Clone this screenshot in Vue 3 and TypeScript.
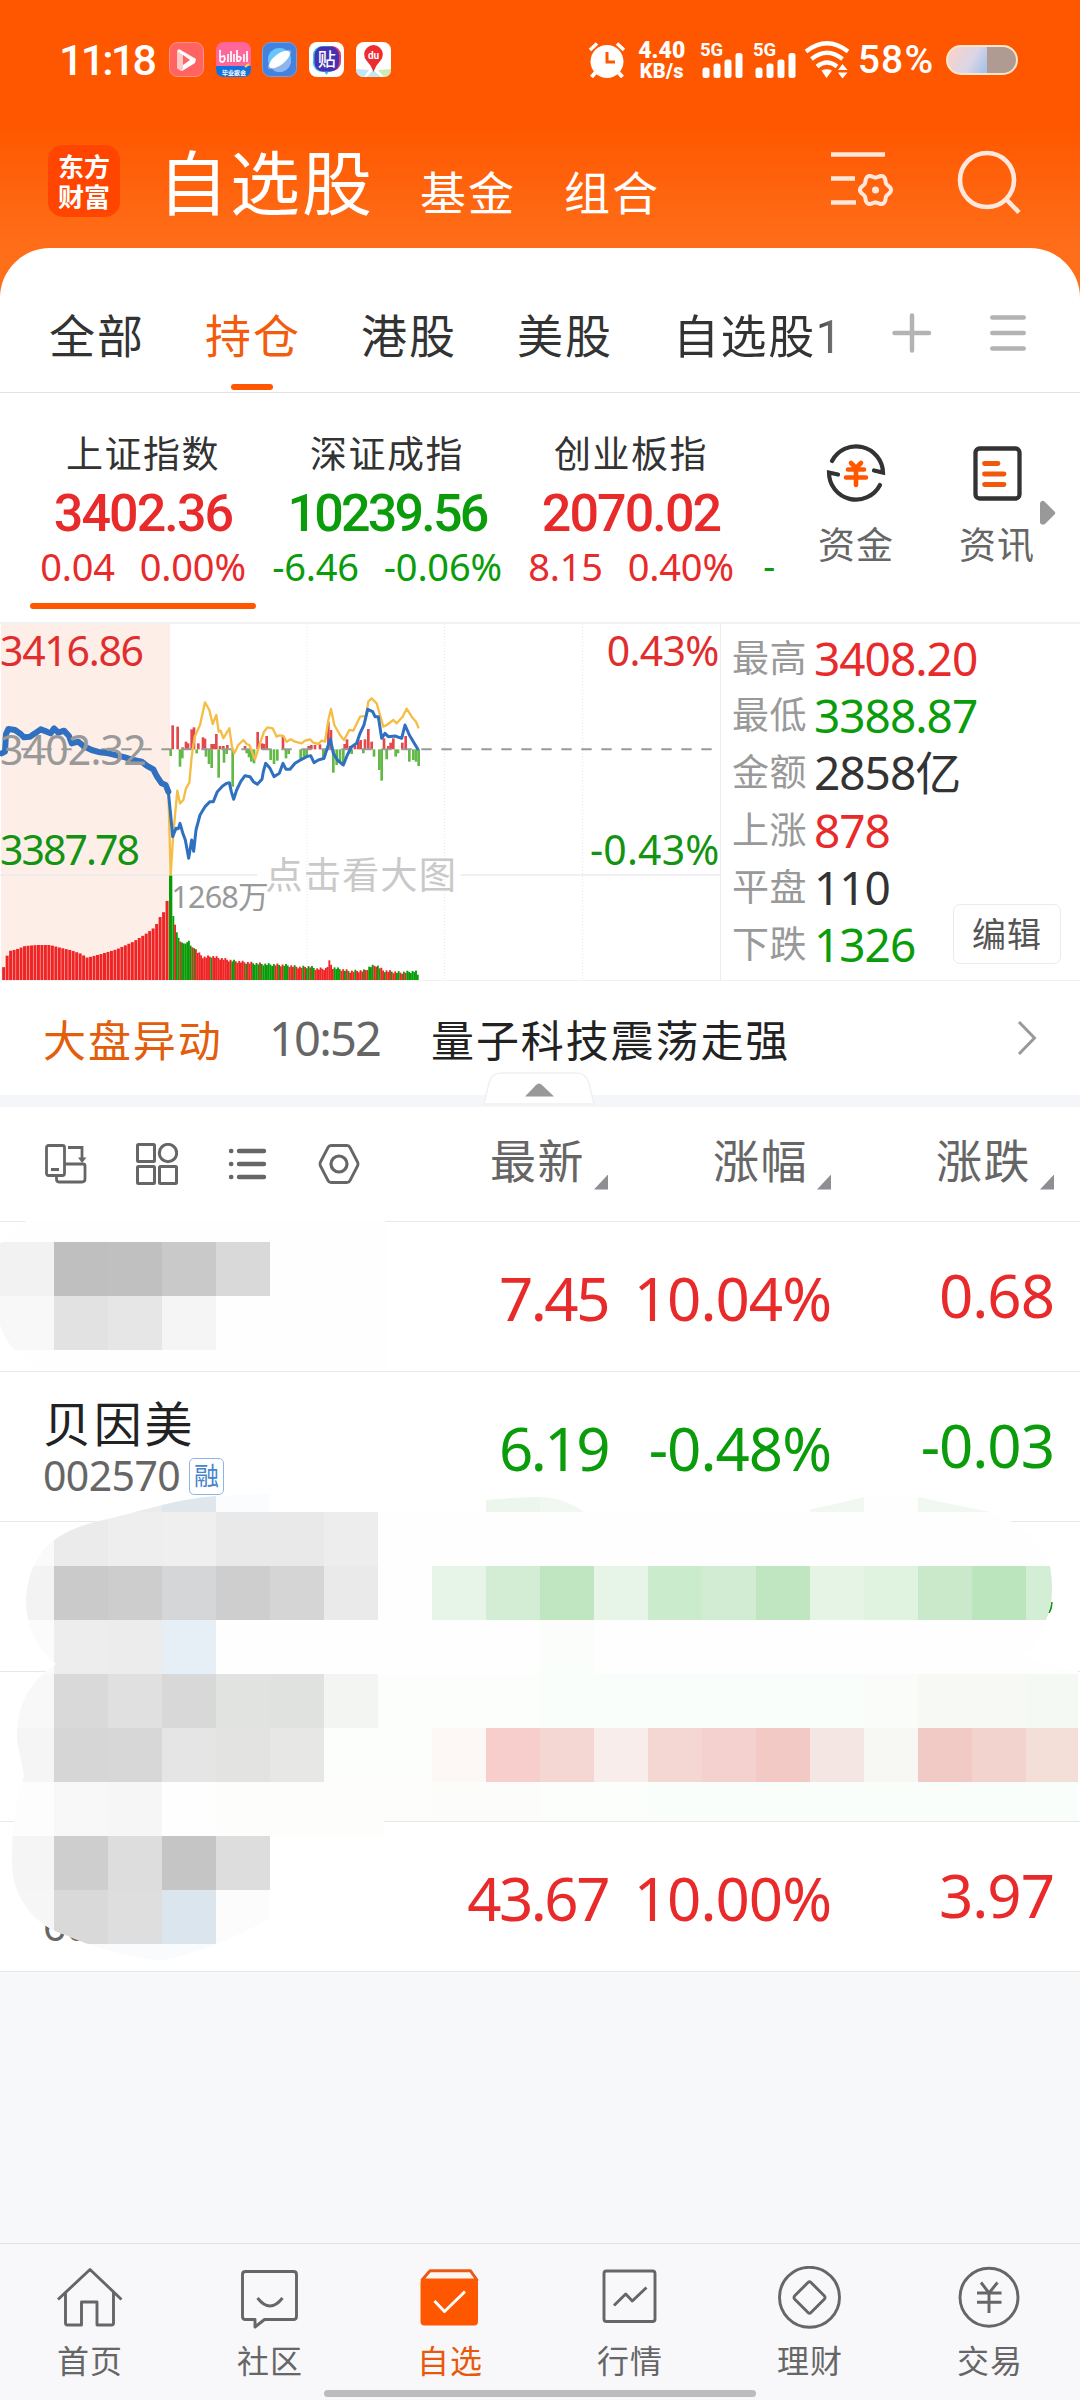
<script setup lang="ts">
type Tone = 'up' | 'down' | 'flat'
type Pt = [number, number]

const tabs = ['全部', '持仓', '港股', '美股']

interface IndexQuote { name: string; value: string; diff: string; pct: string; tone: Tone }
const indices: IndexQuote[] = [
  { name: '上证指数', value: '3402.36', diff: '0.04', pct: '0.00%', tone: 'up' },
  { name: '深证成指', value: '10239.56', diff: '-6.46', pct: '-0.06%', tone: 'down' },
  { name: '创业板指', value: '2070.02', diff: '8.15', pct: '0.40%', tone: 'up' },
]

const stats: { label: string; value: string; tone: Tone }[] = [
  { label: '最高', value: '3408.20', tone: 'up' },
  { label: '最低', value: '3388.87', tone: 'down' },
  { label: '金额', value: '2858亿', tone: 'flat' },
  { label: '上涨', value: '878', tone: 'up' },
  { label: '平盘', value: '110', tone: 'flat' },
  { label: '下跌', value: '1326', tone: 'down' },
]

interface Row { name?: string; code?: string; tag?: string; price?: string; pct?: string; diff?: string; tone: Tone }
const rows: Row[] = [
  { price: '7.45', pct: '10.04%', diff: '0.68', tone: 'up' },
  { name: '贝因美', code: '002570', tag: '融', price: '6.19', pct: '-0.48%', diff: '-0.03', tone: 'down' },
  { tone: 'down' },
  { tone: 'up' },
  { code: '60', price: '43.67', pct: '10.00%', diff: '3.97', tone: 'up' },
]

/* Gear outline with six lobes */
const gear = Array.from({ length: 73 }, (_, i) => {
  const a = (i * Math.PI) / 36
  const r = 14 + 1.6 * Math.cos(6 * a)
  return `${(44.5 + r * Math.cos(a)).toFixed(1)},${(38 + r * Math.sin(a)).toFixed(1)}`
}).join(' ')

/* Intraday chart, three units per pixel */
const blueOpen = '5,430 15,425 18,372 25,357 45,360 62,372 72,382 90,380 105,370 122,358 140,365 152,370 162,355 175,368 192,362 207,378 215,400 235,395 250,408 275,420 300,427 325,430 350,436 375,442 400,450 425,455 440,467 460,478 470,498 485,520 497,525 505,545'
const blueLine = '505,545 512,615 518,680 528,655 535,656 540,640 548,668 556,690 566,745 575,690 581,724 588,660 600,615 615,590 630,575 640,575 652,545 668,528 680,520 688,518 694,545 701,568 710,540 722,515 735,497 750,500 760,515 772,523 786,508 790,485 797,460 810,475 822,500 838,490 849,460 858,478 870,478 885,460 905,448 920,440 932,437 942,458 955,450 972,445 980,420 991,387 1000,430 1012,450 1030,465 1042,435 1055,410 1070,400 1080,370 1092,345 1103,298 1118,305 1125,320 1135,320 1145,385 1155,370 1165,380 1185,378 1205,385 1215,345 1228,375 1240,395 1255,420'
const yellowLine = '505,540 512,795 520,670 532,542 540,580 550,570 558,535 568,518 575,440 584,380 600,345 615,277 628,300 638,342 649,315 656,365 662,362 670,385 688,355 696,410 703,430 715,405 730,390 740,402 748,405 765,448 780,400 792,365 803,352 818,355 830,380 838,376 850,378 860,395 872,388 885,395 905,400 915,392 930,388 940,398 955,402 965,392 975,395 985,330 993,297 1003,345 1020,375 1032,390 1048,360 1060,362 1080,320 1098,318 1105,275 1115,265 1130,280 1140,315 1150,350 1160,345 1180,330 1190,340 1208,320 1220,296 1235,320 1248,335 1256,355'
const upBars: Pt[] = [[518, 346], [533, 350], [548, 412], [558, 395], [564, 400], [575, 358], [582, 352], [595, 400], [609, 382], [615, 386], [635, 402], [642, 402], [649, 372], [660, 408], [670, 408], [682, 405], [735, 408], [773, 366], [786, 400], [792, 402], [800, 378], [849, 378], [926, 408], [934, 405], [945, 405], [960, 403], [985, 335], [993, 360], [1034, 402], [1041, 388], [1050, 408], [1065, 408], [1075, 395], [1082, 390], [1095, 388], [1105, 357], [1115, 395], [1152, 385], [1165, 408], [1172, 398], [1180, 385], [1207, 398], [1217, 378]]
const downBars: Pt[] = [[512, 438], [540, 470], [547, 445], [590, 430], [618, 440], [627, 462], [635, 474], [656, 503], [672, 458], [680, 432], [698, 530], [740, 430], [747, 442], [754, 455], [762, 460], [812, 450], [822, 462], [832, 452], [858, 445], [866, 432], [902, 452], [912, 440], [920, 438], [970, 450], [977, 432], [1000, 488], [1010, 465], [1020, 455], [1030, 462], [1055, 432], [1090, 430], [1122, 440], [1138, 480], [1145, 512], [1160, 448], [1187, 440], [1194, 430], [1228, 455], [1240, 450], [1248, 455], [1256, 468]]

function level(points: Pt[], x: number): number {
  for (let i = 1; i < points.length; i++) {
    const a = points[i - 1]
    const b = points[i]
    if (x <= b[0]) return a[1] + ((b[1] - a[1]) * (x - a[0])) / (b[0] - a[0])
  }
  return points[points.length - 1][1]
}
const openEnvelope: Pt[] = [[10, 1075], [20, 1040], [28, 1023], [50, 1018], [75, 1008], [110, 1005], [150, 1005], [180, 1013], [210, 1020], [240, 1030], [262, 1043], [300, 1033], [350, 1018], [400, 995], [440, 970], [460, 955], [470, 942], [482, 918], [492, 905], [502, 870]]
const openVolume = Array.from({ length: 48 }, (_, i) => {
  const x = 11 + i * 10.43
  return { x, y: level(openEnvelope, x) }
})
const dayEnvelope: Pt[] = [[520, 918], [526, 948], [533, 978], [541, 995], [555, 1002], [567, 992], [573, 1010], [585, 1016], [593, 1027], [610, 1042], [635, 1039], [660, 1045], [700, 1053], [760, 1060], [800, 1063], [860, 1066], [900, 1072], [930, 1070], [950, 1077], [980, 1076], [988, 1055], [998, 1073], [1050, 1084], [1095, 1082], [1110, 1070], [1130, 1066], [1150, 1082], [1200, 1088], [1247, 1084], [1258, 1102]]
const greenSpans: Pt[] = [[517, 523], [530, 536], [545, 572], [578, 583], [631, 637], [696, 702], [738, 742], [755, 778], [785, 826], [835, 840], [850, 866], [884, 889], [905, 910], [920, 926], [932, 946], [1000, 1020], [1030, 1035], [1045, 1050], [1066, 1071], [1088, 1092], [1105, 1118], [1133, 1139], [1150, 1155], [1175, 1180], [1190, 1200], [1207, 1212], [1222, 1262]]
const dayVolume = Array.from({ length: 142 }, (_, i) => {
  const x = 520 + i * 5.2
  const jitter = i > 12 ? ((i * 7) % 5) * 2 - 4 : 0
  return { x, y: level(dayEnvelope, x) + jitter, green: greenSpans.some(([a, b]) => x >= a && x <= b) }
})

/* Privacy mosaic, 54px tiles; every entry is a row top with its tile colours from x = 0 */
const G = '#fcfefb'
const H = '#f9fefa'
const mosaic: [number, string[]][] = [
  [1242, ['#f2f2f2', '#bfbfbf', '#c0c0c0', '#c9c9c9', '#d9d9d9']],
  [1296, ['#f8f8f8', '#e2e2e2', '#e6e6e6', '#f5f5f5']],
  [1458, ['', '#ebebeb', '#ebebeb', '#dfe6ec', '#fafcfe', '', '', '', '', '#ecf6ed', '#f0f8f1', '', '', '', '', '#f1f8f2', '', '#f1f8f2', '#f1f8f2']],
  [1512, ['#fafafa', '#ebebeb', '#eeeeee', '#efefef', '#e9e9e9', '#e9e9e9', '#ededed']],
  [1566, ['#f3f3f3', '#cacaca', '#cdcdcd', '#d4d6d8', '#cecece', '#d5d5d5', '#eaeaea', '', '#e6f5e7', '#d2edd3', '#bfe6c1', '#e6f5e7', '#cbebcd', '#d1ecd2', '#bfe6c0', '#e5f4e5', '#e0f2e0', '#c9e9ca', '#bbe5bc', '#d4edd5']],
  [1620, ['#fbfbfb', '#ededed', '#ececec', '#e6eef6', '', '', '', '', '', '', '#fbfdfb']],
  [1674, ['#f8f8f8', '#d9d9d9', '#e0e0e0', '#d8d8d8', '#e1e3e0', '#e0e2df', '#f3f5f2', G, G, G, H, H, H, H, H, H, '#f9fcf9', '#f7f9f5', '#f7f9f5', '#f5f9f4']],
  [1728, ['#f5f5f5', '#d6d6d6', '#d7d7d7', '#e5e5e5', '#e3e4e1', '#e7e7e5', G, G, '#fdf8f5', '#f7cecc', '#f4d7d3', '#f8edea', '#f4d6d3', '#f4d1cf', '#f3c9c6', '#f4e6e3', '#f7f8f3', '#f2cac5', '#f2d3cd', '#f3ded8']],
  [1782, ['#fdfdfd', '#f8f8f8', '#f6f6f6', '', '#fdfefb', '#fdfefb', '#fdfefb', '#fdfefb', '#fcfdfa', '#fcfdfa', G, G, H, H, H, H, H, H, H, H]],
  [1836, ['#f5f5f5', '#cecece', '#dddddd', '#c5c5c5', '#dddddd']],
  [1890, ['#f6f6f6', '#d9d9d9', '#dedede', '#dbe5ee', '#fcfcfc']],
  [1944, ['#fafbfd', '#fafbfd', '#fafbfd', '#fafbfd', '#fcfcfd']],
]
const tiles = mosaic.flatMap(([y, cols]) => cols.map((fill, i) => ({ x: i * 54, y, fill })).filter((t) => t.fill))

const nav = ['首页', '社区', '自选', '行情', '理财', '交易']
</script>

<template>
  <div class="screen">
    <header class="head">
      <div class="status">
        <span class="clock">11:18</span>
        <div class="apps">
          <svg width="35" height="35" viewBox="0 0 35 35">
            <rect x=".5" y=".5" width="34" height="34" rx="8" fill="#ff6462" stroke="#ff9087" />
            <path d="M10 7 L27 17 L26 21 L13 29 L8 26 V9Z" fill="#fff" />
            <path d="M8 9 L14 13 V27 L12 29 L8 26Z" fill="#ffc9c8" />
            <path d="M14 13 L21 18 L14 23Z" fill="#ff6462" />
          </svg>
          <svg width="35" height="35" viewBox="0 0 35 35">
            <rect width="35" height="35" rx="8" fill="#ff6699" />
            <path d="M0 24 H35 V27 Q35 35 27 35 H8 Q0 35 0 27Z" fill="#1172dd" />
            <path d="M4 8 V18 Q4 20 7 20 Q10 18 8 14 L4 15 M12 12 V20 M15 9 V20 M18 12 V20 M21 8 V19 Q24 20 25 16 Q24 14 21 15 M28 12 V20 M31 9 V20" fill="none" stroke="#fff" stroke-width="1.700" />
            <text x="18" y="32.500" text-anchor="middle" font-size="6" font-weight="700" fill="#fff">毕业歌会</text>
            <path d="M29 25 L33 22" stroke="#ffd83d" stroke-width="2" />
          </svg>
          <svg width="35" height="35" viewBox="0 0 35 35">
            <rect x=".5" y=".5" width="34" height="34" rx="8" fill="#4382df" stroke="#75a0e6" />
            <circle cx="17.500" cy="17.500" r="11.500" fill="#69c6fb" />
            <path d="M7 23 A11.500 11.500 0 0 0 29 17Z" fill="#8fb5ee" />
            <ellipse cx="17.500" cy="17.500" rx="14.500" ry="5" transform="rotate(-38 17.5 17.500)" fill="#7fa9eb" />
            <ellipse cx="17.500" cy="17.500" rx="12.500" ry="5.500" transform="rotate(-38 17.5 17.500)" fill="#fff" />
          </svg>
          <svg width="35" height="35" viewBox="0 0 35 35">
            <rect width="35" height="35" rx="8" fill="#fff" />
            <rect x="6" y="4" width="26" height="25" rx="9" fill="#e2406a" />
            <rect x="4" y="4" width="25" height="26" rx="9" fill="#3abef2" />
            <path d="M14 28 L17.500 33 L21 28Z" fill="#3abef2" />
            <rect x="5.500" y="4.500" width="24.500" height="25" rx="8.500" fill="#4432b2" />
            <text x="17.700" y="23.500" text-anchor="middle" font-size="18" font-weight="500" fill="#fff">贴</text>
          </svg>
          <svg width="35" height="35" viewBox="0 0 35 35">
            <rect width="35" height="35" rx="8" fill="#fff" />
            <path d="M0 27 L13 28 L8 35 Q0 35 0 27Z" fill="#bfe7f5" />
            <path d="M11 35 L17 28 L25 35Z" fill="#bfe7f5" />
            <path d="M22 28 L35 27 Q35 35 28 35Z" fill="#cfeab4" />
            <path d="M17.500 30 Q15 23 10.500 18.500 A9.300 9.300 0 1 1 24.500 18.500 Q20 23 17.500 30Z" fill="#ee2b2f" />
            <text x="17.500" y="17" text-anchor="middle" font-size="10" font-weight="700" fill="#fff">du</text>
          </svg>
        </div>
        <svg class="alarm" width="38" height="38" viewBox="0 0 38 38" fill="none" stroke="#fff">
          <circle cx="19" cy="20.500" r="16.500" fill="#fff" stroke="none" />
          <path d="M2 9 L9 2.500 M36 9 L29 2.500" stroke-width="3.500" />
          <path d="M8 31 L3.500 36 M30 31 L34.500 36" stroke-width="4" />
          <path d="M19 11 V21 H27" stroke="#ff5700" stroke-width="3" />
        </svg>
        <div class="speed"><b>4.40</b><b class="unit">KB/s</b></div>
        <svg v-for="n in 2" :key="n" class="signal" width="44" height="38" viewBox="0 0 44 38" fill="#fff">
          <text x="0" y="14.500" font-size="18.500" font-weight="700">5G</text>
          <rect x="2.500" y="26.500" width="7" height="10.500" rx="2.500" />
          <rect x="13.500" y="22.500" width="7" height="14.500" rx="2.500" />
          <rect x="24.500" y="18.500" width="7" height="18.500" rx="2.500" />
          <rect x="35.500" y="12" width="7" height="25" rx="2.500" />
        </svg>
        <svg class="wifi" width="46" height="38" viewBox="0 0 46 38" fill="none" stroke="#fff" stroke-width="4.200">
          <path d="M2 10.500 Q23 -6 44 10.500" />
          <path d="M7.500 18 Q23 5.500 38.500 18" />
          <path d="M13 25.500 Q23 17.500 33 25.500" />
          <path d="M17.500 29.500 Q22.500 27 28 29.500 L22.500 37Z" fill="#fff" stroke="none" />
          <path d="M34 29 L38.500 23 L43.500 29Z M34 31.500 L38.500 37.500 L43.500 31.500Z" fill="#fff" stroke="none" />
        </svg>
        <span class="battery-text">58%</span>
        <span class="battery"></span>
      </div>
      <div class="title-row">
        <div class="logo"><span>东方</span><span>财富</span></div>
        <span class="title">自选股</span>
        <span class="sub">基金</span>
        <span class="sub">组合</span>
        <svg class="manage" width="64" height="60" viewBox="0 0 64 60" fill="none" stroke="#ffe7dc" stroke-width="4.600">
          <path d="M0 2.500 H54 M0 26.500 H24 M0 50.500 H25" />
          <polygon :points="gear" stroke-width="4" />
          <circle cx="44.500" cy="38" r="3.500" fill="#ffe7dc" stroke="none" />
        </svg>
        <svg class="search" width="64" height="66" viewBox="0 0 64 66" fill="none" stroke="#ffe7dc" stroke-width="4.600">
          <circle cx="30" cy="30" r="27" />
          <path d="M48.500 48.500 L62 62.500" />
        </svg>
      </div>
    </header>

    <main class="sheet">
      <nav class="tabs">
        <span v-for="(t, i) in tabs" :key="t" class="tab" :class="{ on: i === 1 }">{{ t }}</span>
        <span class="tab fade">自选股1</span>
        <svg class="plus" width="40" height="40" viewBox="0 0 40 40" stroke="#b3b3b3" stroke-width="4.500" stroke-linecap="round">
          <path d="M2.500 20 H37 M20 2.500 V37.500" />
        </svg>
        <svg class="menu" width="36" height="38" viewBox="0 0 36 38" stroke="#b3b3b3" stroke-width="4.500" stroke-linecap="round">
          <path d="M2.300 3.500 H33.700 M2.300 19 H33.700 M2.300 34.500 H33.700" />
        </svg>
      </nav>

      <section class="indices">
        <div v-for="(q, i) in indices" :key="q.name" class="quote" :class="[q.tone, { on: i === 0 }]">
          <span class="qname">{{ q.name }}</span>
          <span class="qvalue">{{ q.value }}</span>
          <span class="qsub"><i>{{ q.diff }}</i><i>{{ q.pct }}</i></span>
        </div>
        <span class="next down">-</span>
        <div class="tool fund">
          <svg width="64" height="62" viewBox="0 0 64 62" fill="none" stroke="#333" stroke-width="4.200" stroke-linecap="round">
            <path d="M8 19 A27 27 0 0 1 59 30.500 L50 28.500" />
            <path d="M56 43 A27 27 0 0 1 5 30.500 L14 32.500" />
            <path d="M27 21 L32 26 L37 21 M24 27.500 H40 M22 35.500 H42 M32 27 V43" stroke="#ff5700" stroke-width="4.600" />
          </svg>
          <span>资金</span>
        </div>
        <div class="tool">
          <svg width="64" height="62" viewBox="0 0 64 62" fill="none" stroke="#333" stroke-width="4.300" stroke-linecap="round">
            <rect x="10.500" y="6.500" width="44" height="50" rx="4" />
            <path d="M19.500 21.500 H33 M19.500 32 H39 M19.500 42.500 H39" stroke="#f2580c" stroke-width="4.800" />
          </svg>
          <span>资讯</span>
        </div>
        <svg class="more" width="16" height="26" viewBox="0 0 16 26"><path d="M0 3 Q2 -1 5 2 L14.500 11.500 Q16 13 14.500 14.500 L5 24 Q2 26 0 23Z" fill="#999" /></svg>
      </section>

      <section class="market">
        <svg class="chart" width="720" height="356" viewBox="0 42 2160 1068">
          <rect x="3" y="42" width="507" height="1068" fill="#fdeee8" />
          <g stroke="#e6e6ea" stroke-width="3" stroke-dasharray="3 6">
            <path d="M921 42 V1110 M1334 42 V1110 M1748 42 V1110" />
          </g>
          <path d="M0 795 H772 M1382 795 H2160" stroke="#ececee" stroke-width="4" />
          <g fill="#e5484a"><rect v-for="[x, y] in upBars" :key="x" :x="x - 4" :y="y" width="8" :height="418 - y" /></g>
          <g fill="#62b946"><rect v-for="[x, y] in downBars" :key="x" :x="x - 4" y="418" width="8" :height="y - 418" /></g>
          <path d="M64 418 H2160" stroke="#999" stroke-width="6" stroke-dasharray="31 29" />
          <polyline :points="yellowLine" fill="none" stroke="#f4bd45" stroke-width="7" stroke-linejoin="round" />
          <polyline :points="blueOpen" fill="none" stroke="#3070c0" stroke-width="18" stroke-linejoin="round" stroke-linecap="round" />
          <polyline :points="blueLine" fill="none" stroke="#3070c0" stroke-width="9" stroke-linejoin="round" />
          <g fill="#ef2425"><rect v-for="b in openVolume" :key="b.x" :x="b.x - 4.500" :y="b.y" width="9" :height="1110 - b.y" /></g>
          <rect v-for="b in dayVolume" :key="b.x" :x="b.x - 2.800" :y="b.y" width="5.600" :height="1110 - b.y" :fill="b.green ? '#079c07' : '#ef2425'" />
          <rect x="507" y="797" width="10" height="313" fill="#079c07" />
          <g font-size="123">
            <text x="0" y="169" fill="#e02e2e" textLength="432">3416.86</text>
            <text x="0" y="466" fill="#999" textLength="440">3402.32</text>
            <text x="0" y="766" fill="#129412" textLength="420">3387.78</text>
            <text x="1820" y="169" fill="#e02e2e" textLength="338">0.43%</text>
            <text x="1770" y="766" fill="#129412" textLength="388">-0.43%</text>
          </g>
          <text x="514" y="893" font-size="92" fill="#999" textLength="292">1268万</text>
          <text x="796" y="838" font-size="112" fill="#c9c9c9" textLength="572">点击看大图</text>
        </svg>
        <div class="stats">
          <p v-for="s in stats" :key="s.label"><span class="label">{{ s.label }}</span><span class="value" :class="s.tone">{{ s.value }}</span></p>
          <span class="edit">编辑</span>
        </div>
      </section>

      <section class="news">
        <span class="kind">大盘异动</span>
        <span class="time">10:52</span>
        <span class="headline">量子科技震荡走强</span>
        <svg width="20" height="36" viewBox="0 0 20 36" fill="none" stroke="#999" stroke-width="3"><path d="M2 2 L17.500 18 L2 34" /></svg>
        <svg class="handle" width="112" height="33" viewBox="0 0 112 33">
          <path d="M1 32 L6 11 Q8 1 19 1 H93 Q103 1 106 11 L111 32Z" fill="#fff" stroke="#f0f0f2" stroke-width="1.500" />
          <path d="M42 24.500 L53 13 Q56 10 59 13 L71 24.500Z" fill="#999" />
        </svg>
      </section>

      <section class="columns">
        <svg width="42" height="42" viewBox="0 0 42 42" fill="none" stroke="#666" stroke-width="2.800">
          <rect x="1.500" y="2.500" width="18" height="30" rx="2" />
          <path d="M6 26.500 H14 M23 4.500 H37 V16 M20 21 H38 Q40 21 40 23 V36 Q40 39 37 39 H14 Q11.500 39 11.500 36 V33" />
          <path d="M33 14.500 H41.500 L37 20Z" fill="#666" stroke="none" />
        </svg>
        <svg width="42" height="42" viewBox="0 0 42 42" fill="none" stroke="#666" stroke-width="3">
          <rect x="1.500" y="1.500" width="17" height="17" rx="1" /><circle cx="32" cy="10" r="8.700" />
          <rect x="1.500" y="23.500" width="17" height="17" rx="1" /><rect x="23.500" y="23.500" width="17" height="17" rx="1" />
        </svg>
        <svg width="42" height="42" viewBox="0 0 42 42" stroke="#666" stroke-width="4.400" stroke-linecap="round">
          <path d="M4 8 h.3 M4 21 h.3 M4 34 h.3 M12 8 H37 M12 21 H37 M12 34 H37" />
        </svg>
        <svg width="42" height="42" viewBox="0 0 42 42" fill="none" stroke="#666" stroke-width="2.800">
          <path d="M13 2.500 H29 Q31 2.500 32 4.500 L39.500 19 Q40.500 21 39.500 23 L32 37.500 Q31 39.500 29 39.500 H13 Q11 39.500 10 37.500 L2.500 23 Q1.500 21 2.500 19 L10 4.500 Q11 2.500 13 2.500Z" />
          <circle cx="21" cy="21" r="8" stroke-width="3.200" />
        </svg>
        <span v-for="c in ['最新', '涨幅', '涨跌']" :key="c" class="col"><b>{{ c }}</b><i></i></span>
      </section>

      <section class="list">
        <div v-for="(r, i) in rows" :key="i" class="row" :class="r.tone">
          <div class="stock">
            <span class="name">{{ r.name }}</span>
            <span class="code">{{ r.code }}<em v-if="r.tag">{{ r.tag }}</em></span>
          </div>
          <span class="num price">{{ r.price }}</span>
          <span class="num">{{ r.pct }}</span>
          <span class="num last">{{ r.diff }}</span>
        </div>
        <svg class="mask" width="1080" height="750" viewBox="0 1221 1080 750">
          <defs>
            <clipPath id="smear">
              <path d="M0 1244 Q10 1230 26 1221 Q60 1203 120 1202 H330 Q375 1210 385 1221 Q388 1230 388 1242 V1368 H40 Q8 1352 0 1325Z" />
              <path d="M162 1505 Q190 1498 216 1496 L270 1494 V1512 H486 V1500 Q520 1497 540 1497 Q565 1498 584 1512 H798 L840 1503 L864 1497 H918 L990 1512 Q1040 1530 1050 1566 Q1056 1600 1045 1622 Q1040 1650 1018 1655 L1064 1668 H1078 V1821 H384 V1836 H270 V1918 Q215 1950 160 1961 Q125 1957 85 1943 L63 1934 Q50 1930 38 1920 Q12 1897 12 1862 Q12 1810 24 1776 L17 1740 Q15 1690 56 1664 Q26 1640 26 1600 Q28 1560 54 1540 Q75 1525 108 1519Z" />
            </clipPath>
          </defs>
          <g clip-path="url(#smear)" shape-rendering="crispEdges">
            <rect x="0" y="1200" width="1080" height="780" fill="#fefefe" />
            <rect v-for="t in tiles" :key="`${t.x}-${t.y}`" :x="t.x" :y="t.y" width="54" height="54" :fill="t.fill" />
          </g>
          <path d="M1052 1602 Q1052 1610 1049 1613 Q1051 1608 1052 1602Z" fill="#129412" stroke="#129412" />
        </svg>
      </section>
    </main>

    <footer class="bottom">
      <div v-for="(n, i) in nav" :key="n" class="item" :class="{ on: i === 2 }">
        <svg width="70" height="64" viewBox="0 0 70 64" fill="none" stroke="#666" stroke-width="2.900" stroke-linejoin="round">
          <path v-if="i === 0" d="M3 33.500 L35 3.500 L66.500 33.500 M10.500 26.500 V57 Q10.500 59 12.500 59 H26.500 V36 H42 V59 H56.500 Q58.500 59 58.500 57 V26.500" />
          <path v-else-if="i === 1" d="M10.500 5.500 H58.500 Q61.500 5.500 61.500 8.500 V50.500 Q61.500 53.500 58.500 53.500 H29.500 L20 61 V53.500 H10.500 Q7.500 53.500 7.500 50.500 V8.500 Q7.500 5.500 10.500 5.500Z M22.500 32 Q35 48 47.500 32" />
          <g v-else-if="i === 2">
            <path d="M7 14 L15 4.800 H55.500 L62 14Z" fill="#fff5ef" stroke="#ea5a15" />
            <rect x="5.500" y="13" width="57.500" height="46.500" rx="4" fill="#ff5700" stroke="none" />
            <path d="M19.500 35 L29.500 45.500 L50 25.500" stroke="#fff" />
          </g>
          <g v-else-if="i === 3">
            <rect x="9" y="5" width="51" height="50.500" rx="2.500" />
            <path d="M19 39.500 L30.700 28 L37.300 35 L51.500 21.500" />
          </g>
          <g v-else-if="i === 4">
            <circle cx="34.500" cy="31.300" r="30" />
            <path d="M33 16.500 Q34.500 15 36 16.500 L49.500 30 Q50.500 31.500 49.500 33 L36 46.500 Q34.500 48 33 46.500 L19.500 33 Q18.500 31.500 19.500 30Z" />
          </g>
          <g v-else>
            <circle cx="34" cy="31.300" r="29" />
            <path d="M26 16.500 L34 27 L42.500 16.500 M22 27 H46.500 M22 36.300 H46.500 M34 27 V47" />
          </g>
        </svg>
        <span>{{ n }}</span>
      </div>
      <span class="homebar"></span>
    </footer>
  </div>
</template>

<style>
body { margin: 0; }
</style>

<style scoped>
.screen { width: 1080px; height: 2400px; overflow: hidden; display: flex; flex-direction: column; background: #f7f8fa; font-family: Roboto, "Noto Sans CJK SC", sans-serif; color: #333; white-space: nowrap; }
svg { display: block; flex: none; }
i, em { font-style: normal; }
p { margin: 0; }
.up { color: #e82a2a; }
.down { color: #0a9c0a; }
.flat { color: #333; }
.qsub, .chart, .value, .num, .code, .time { font-family: "Noto Sans", "Noto Sans CJK SC", sans-serif; }

.head { height: 300px; flex: none; background: linear-gradient(#ff5700 0, #ff5700 125px, #ff6d18 240px, #ff7019 300px); color: #fff; }
.status { height: 104px; padding: 15px 0 0 59px; box-sizing: border-box; display: flex; align-items: center; }
.clock { width: 110px; font-size: 43px; font-weight: 500; letter-spacing: -2.800px; }
.apps { display: flex; gap: 11.700px; margin-right: 197px; }
.speed { width: 60px; margin-left: 6px; display: flex; flex-direction: column; align-items: center; font-size: 23px; line-height: 23px; font-weight: 700; }
.speed .unit { font-size: 20px; line-height: 19px; letter-spacing: .2px; }
.signal { margin-left: 8px; margin-right: 1px; overflow: visible; }
.wifi { margin-left: 6px; }
.battery-text { width: 96px; padding-left: 8px; box-sizing: border-box; font-size: 39px; letter-spacing: 1.200px; font-weight: 500; line-height: 40px; }
.battery { width: 72px; height: 30px; box-sizing: border-box; border: 2px solid #fbe6cd; border-radius: 15px; background: linear-gradient(90deg, transparent 57%, #b09b92 57%), linear-gradient(120deg, #f3d3cf 10%, #dbd5e6 38%, #a9c4e8 60%); }
.title-row { height: 144px; display: flex; align-items: center; padding: 10px 0 0 48px; box-sizing: border-box; }
.logo { width: 72px; height: 72px; border-radius: 15px; background: #ff4500; display: flex; flex-direction: column; align-items: center; justify-content: center; font: 700 26px/30px "Noto Sans CJK SC", sans-serif; flex: none; }
.title { margin-left: 38px; font-size: 70px; letter-spacing: 2px; line-height: 80px; width: 262px; padding-top: 9px; }
.sub { font-size: 46px; letter-spacing: 2px; line-height: 60px; padding-top: 25px; width: 144px; }
.manage { margin-left: 123px; margin-top: 2px; }
.search { margin-left: 62px; margin-top: 3px; }

.sheet { margin-top: -52px; flex: none; background: #fff; border-radius: 50px 50px 0 0; position: relative; }
.tabs { height: 145px; box-sizing: border-box; border-bottom: 1px solid #e2e2e2; padding-left: 49px; display: flex; align-items: center; gap: 60px; }
.tab { font-size: 46px; letter-spacing: 2px; line-height: 60px; padding-top: 30px; position: relative; height: 114px; box-sizing: border-box; margin-top: 28px; }
.tab.on { color: #f25c0c; }
.tab.on::after { content: ""; position: absolute; left: 26px; bottom: 1px; width: 42px; height: 6px; border-radius: 3px; background: #ff5700; }
.tab.fade { width: 166px; letter-spacing: 1.600px; background: linear-gradient(90deg, #333 85%, #888 100%); background-clip: text; -webkit-background-clip: text; color: transparent; }
.plus { margin-left: -7px; margin-top: 25px; }
.menu { margin-left: -2px; margin-top: 25px; }

.indices { height: 229px; box-sizing: border-box; padding-left: 30px; display: flex; align-items: flex-start; }
.quote { width: 226px; margin-right: 18px; display: flex; flex-direction: column; align-items: center; padding-top: 38px; }
.qname { font-size: 37px; letter-spacing: 1.500px; line-height: 50px; color: #333; }
.qvalue { font-size: 52px; font-weight: 500; line-height: 60px; margin-top: 3px; letter-spacing: -1.900px; }
.quote.down .qvalue { letter-spacing: -2.800px; }
.qsub { font-size: 38px; line-height: 44px; margin-top: 0; display: flex; gap: 25px; letter-spacing: -.2px; }
.quote.on::after { content: ""; width: 226px; height: 6px; border-radius: 3px; background: #ff5700; margin-top: 15px; }
.next { width: 36px; font-size: 38px; line-height: 44px; padding-top: 153px; margin-left: 2px; }
.tool { width: 76px; padding-top: 49px; display: flex; flex-direction: column; align-items: center; font-size: 37px; line-height: 50px; letter-spacing: 1px; color: #666; }
.tool span { margin-top: 18px; }
.tool.fund { margin-left: 18px; margin-right: 65px; }
.more { margin-top: 107px; margin-left: 5px; }

.market { height: 358px; box-sizing: border-box; border-top: 2px solid #f1f1f3; display: flex; }
.chart { border-right: 1.500px solid #ededf0; }
.stats { padding: 6px 0 0 11px; flex: 1; position: relative; }
.stats p { height: 57.200px; line-height: 57.200px; display: flex; }
.stats .label { width: 82px; font-size: 37px; letter-spacing: .5px; color: #999; line-height: 59px; }
.stats .value { font-size: 46px; letter-spacing: -1px; line-height: 56px; }
.edit { position: absolute; left: 232px; top: 280px; width: 108px; height: 60px; box-sizing: border-box; border: 1.500px solid #ebebeb; border-radius: 7px; background: #fff; text-align: center; font-size: 34px; letter-spacing: 1px; line-height: 60px; color: #555; }

.news { height: 115px; border-top: 1.500px solid #f1f1f3; box-sizing: border-box; display: flex; align-items: center; padding-left: 43px; position: relative; font-size: 43px; letter-spacing: 1.900px; }
.kind { color: #e25d0c; width: 226px; }
.time { font-size: 47px; letter-spacing: -1.800px; line-height: 60px; color: #666; width: 162px; }
.headline { color: #222; width: 586px; }
.handle { position: absolute; left: 483px; top: 91px; z-index: 1; }

.columns { height: 126px; box-sizing: border-box; border-top: 12px solid #f5f6fa; display: flex; align-items: center; padding-left: 45px; gap: 49px; color: #666; font-size: 46px; letter-spacing: 1.500px; }
.col { display: flex; align-items: center; width: 118px; margin-right: 56px; }
.col b { font-weight: 400; line-height: 60px; margin-top: -5px; }
.col i { width: 15px; height: 15px; margin: 36px 0 0 9px; background: #8e8e93; clip-path: polygon(100% 0, 100% 100%, 0 100%); }
.columns svg + .col { margin-left: 81px; }

.list { position: relative; }
.row { height: 150px; box-sizing: border-box; border-top: 1px solid #e8e8e8; display: flex; align-items: center; }
.list::after { content: ""; display: block; height: 1px; background: #e8e8ea; }
.stock { width: 384px; padding: 22px 0 0 43px; box-sizing: border-box; height: 149px; flex: none; }
.stock span { display: flex; align-items: center; }
.stock .name { font-size: 48px; letter-spacing: 2.800px; color: #222; height: 54px; }
.stock .code { font-size: 41px; height: 30px; line-height: 30px; color: #666; letter-spacing: -.6px; margin-top: 12px; }
.code em { width: 35px; height: 37px; box-sizing: border-box; border: 1.500px solid #8cb6e4; border-radius: 5px; color: #4684cc; font-size: 25px; line-height: 32px; text-align: center; letter-spacing: 0; margin: 3px 0 0 9px; }
.num { width: 223px; text-align: right; font-size: 60px; line-height: 80px; letter-spacing: -1px; padding-top: 3px; box-sizing: border-box; }
.num.price { width: 224px; letter-spacing: -2.500px; }
.num.last { padding: 0 0 3px; }
.mask { position: absolute; left: 0; top: 0; }

.bottom { margin-top: auto; height: 157px; flex: none; box-sizing: border-box; border-top: 1px solid #e0e1e4; background: #f8f8fb; display: flex; position: relative; }
.item { width: 180px; display: flex; flex-direction: column; align-items: center; padding-top: 22px; font-size: 32px; line-height: 40px; letter-spacing: 1px; color: #666; }
.item span { margin-top: 12px; }
.item.on { color: #e8580c; }
.homebar { position: absolute; left: 324px; bottom: 3px; width: 432px; height: 7px; border-radius: 4px; background: #bcbcbc; }
</style>
